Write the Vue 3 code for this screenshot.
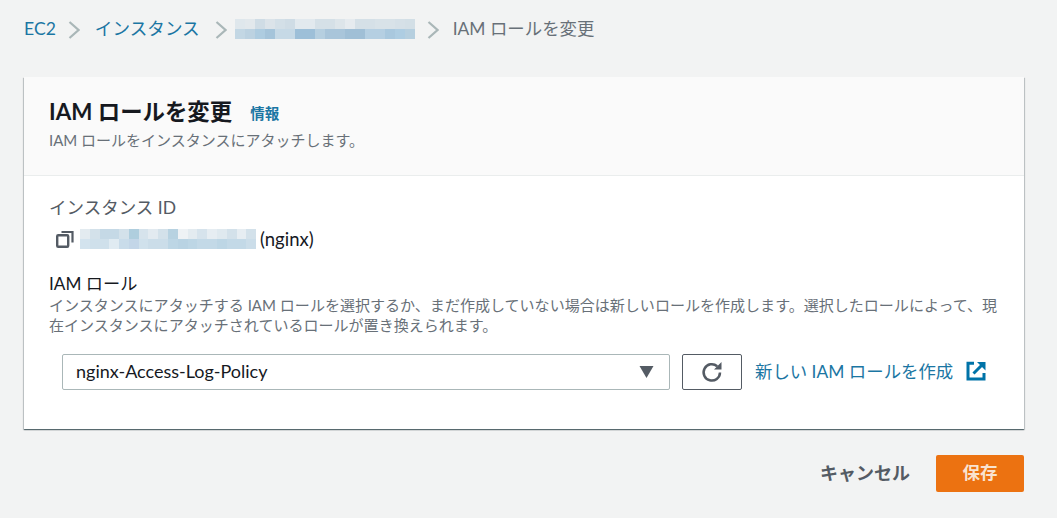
<script setup>
const crumbBlur = [
  ['#dfe7ec','#e2e8ec','#cfdce5','#dbe3e9','#d3dfe7','#cfdce5','#e2e9ee','#e2e9ee','#d5e0e7','#d5e0e7','#dde5ea','#e6ebef','#d5e0e7','#d5e0e7','#d8e2e8','#d8e2e8','#d5e0e7','#d3dfe6'],
  ['#c3d7e4','#bcd2e1','#aecce0','#a5c4da','#c6d9e6','#c6d9e6','#9dbfd8','#9dbfd8','#b6cfe0','#a9c5da','#a9c5da','#a0bfd6','#a0bfd6','#b5cfe2','#b5cfe2','#a9c8de','#aecde2','#b6cfdf']
]
const idBlur = [
  ['#e3ebf0','#d3e1ea','#c5d9e6','#c5d9e6','#d3e1ea','#afcede','#d6e3ec','#e2eaf0','#d3e1ea','#b7d2e1','#eef2f5','#e3ebf0','#d6e3ec','#e6edf2','#dfe9ef','#d3e1ea','#e6edf2','#d3e1ea'],
  ['#d3e3ee','#cfe0eb','#cfe0eb','#e0ebf2','#c9dcea','#c3d6e8','#d0e1ec','#cbdde9','#cbdde9','#bdd6e5','#b9d3e3','#bdd6e5','#c3d9e7','#c3d9e7','#bdd6e5','#c3d9e7','#c3d9e7','#cbdde9']
]
</script>

<template>
  <div class="page">
    <nav class="crumbs">
      <a class="link">EC2</a>
      <svg class="chev chev-a" viewBox="0 0 12 18"><path d="M1.5 1l9 8-9 8" /></svg>
      <a class="link">インスタンス</a>
      <svg class="chev chev-b" viewBox="0 0 12 18"><path d="M1.5 1l9 8-9 8" /></svg>
      <div class="blur crumb-blur">
        <div v-for="(row, r) in crumbBlur" :key="r" class="blur-row">
          <span v-for="(c, i) in row" :key="i" :style="{ background: c }"></span>
        </div>
      </div>
      <svg class="chev chev-c" viewBox="0 0 12 18"><path d="M1.5 1l9 8-9 8" /></svg>
      <span class="current">IAM ロールを変更</span>
    </nav>

    <section class="card">
      <header class="card-head">
        <div class="title-row">
          <h1>IAM ロールを変更</h1>
          <a class="link info">情報</a>
        </div>
        <p>IAM ロールをインスタンスにアタッチします。</p>
      </header>
      <div class="card-body">
        <div class="label-id">インスタンス ID</div>
        <div class="id-row">
          <svg class="copy" viewBox="0 0 18 18" fill="none">
            <rect x="1.2" y="5.2" width="11" height="11.6" rx="1" stroke="#545b64" stroke-width="2.4" />
            <path d="M5.5 2h11v10.5" stroke="#545b64" stroke-width="2.2" />
          </svg>
          <div class="blur id-blur">
            <div v-for="(row, r) in idBlur" :key="r" class="blur-row">
              <span v-for="(c, i) in row" :key="i" :style="{ background: c }"></span>
            </div>
          </div>
          <span class="nginx">(nginx)</span>
        </div>
        <div class="label-role">IAM ロール</div>
        <p class="desc">インスタンスにアタッチする IAM ロールを選択するか、まだ作成していない場合は新しいロールを作成します。選択したロールによって、現在インスタンスにアタッチされているロールが置き換えられます。</p>
        <div class="control-row">
          <div class="select">
            <span>nginx-Access-Log-Policy</span>
            <svg class="caret" viewBox="0 0 14 12"><path d="M0 0h14L7 12z" fill="#545b64" /></svg>
          </div>
          <button class="refresh" type="button" aria-label="更新">
            <svg viewBox="0 0 22 22" fill="none">
              <path d="M19 11.5a8.2 8.2 0 1 1-2.8-6.3" stroke="#545b64" stroke-width="2.5" />
              <path d="M20.5 1v7.5H13z" fill="#545b64" />
            </svg>
          </button>
          <a class="link create">新しい IAM ロールを作成</a>
          <svg class="ext" viewBox="0 0 20 20" fill="none">
            <path d="M8 2.2H2v15.8h16V12" stroke="#0073a8" stroke-width="3" />
            <path d="M7.5 12.5L16.5 3.5" stroke="#0073a8" stroke-width="3" />
            <path d="M11 1h8.5v8.5z" fill="#0073a8" />
          </svg>
        </div>
      </div>
    </section>

    <footer class="actions">
      <button class="cancel" type="button">キャンセル</button>
      <button class="save" type="button">保存</button>
    </footer>
  </div>
</template>

<style>
html, body { margin: 0; background: #f2f3f3; }
</style>

<style scoped>
.page {
  width: 1057px;
  height: 518px;
  box-sizing: border-box;
  padding: 16px 33px 0 24px;
  background: #f2f3f3;
  color: #16191f;
  font-family: "Lato", "Noto Sans CJK JP", sans-serif;
  overflow: hidden;
}
.link { color: #1b76a3; }
.crumbs {
  display: flex;
  align-items: center;
  height: 26px;
  margin-bottom: 35px;
  font-size: 17.6px;
  line-height: 26px;
}
.chev { width: 12px; height: 18px; fill: none; stroke: #aab7b8; stroke-width: 2.2; flex: none; }
.chev-a { margin: 1px 15px 0 12px; }
.chev-b { margin: 1px 8px 0 15px; }
.chev-c { margin: 1px 14px 0 12px; }
.blur { display: flex; flex-direction: column; flex: none; }
.blur-row { display: flex; height: 10px; }
.blur-row span { flex: 1; }
.crumb-blur { width: 180px; height: 20px; }
.current { color: #687078; font-size: 17.4px; }
.card {
  background: #fff;
  box-shadow: 0 1px 1px 0 rgba(0, 28, 36, .5), 1px 1px 1px 0 rgba(0, 28, 36, .15), -1px 1px 1px 0 rgba(0, 28, 36, .15);
  height: 352px;
}
.card-head {
  height: 99px;
  box-sizing: border-box;
  padding: 21px 25px 0;
  background: #fafafa;
  border-bottom: 1px solid #eaeded;
}
.title-row { display: flex; align-items: center; gap: 19px; height: 28px; }
h1 { margin: 0; font-size: 22.4px; line-height: 28px; font-weight: 700; color: #16191f; }
.info { font-size: 14.5px; font-weight: 700; line-height: 20px; margin-top: 3px; margin-left: -1px; }
.card-head p { margin: 4px 0 0; font-size: 15px; line-height: 20px; color: #687078; }
.card-body { padding: 20px 25px 0; }
.label-id { font-size: 17.5px; line-height: 24px; color: #545b64; }
.id-row { display: flex; align-items: center; height: 26px; margin-top: 6px; font-size: 18.5px; }
.copy { width: 18px; height: 18px; margin-left: 7px; flex: none; }
.id-blur { width: 176px; height: 20px; margin-left: 6px; }
.nginx { margin-left: 4px; color: #16191f; }
.label-role { margin-top: 20px; font-size: 17.2px; line-height: 23px; color: #16191f; }
.desc { margin: 0; width: 952px; font-size: 15.04px; line-height: 20px; color: #687078; }
.control-row { display: flex; align-items: center; margin: 19px 0 0 13px; }
.select {
  box-sizing: border-box;
  width: 608px;
  height: 36px;
  display: flex;
  align-items: center;
  justify-content: space-between;
  padding: 0 15px 2px 13px;
  background: #fff;
  border: 1px solid #aab7b8;
  border-radius: 2px;
  font-size: 18px;
}
.caret { width: 15px; height: 12px; margin-top: 2px; }
.refresh {
  box-sizing: border-box;
  width: 60px;
  height: 36px;
  margin-left: 12px;
  padding: 0;
  display: flex;
  align-items: center;
  justify-content: center;
  background: #fff;
  border: 1px solid #545b64;
  border-radius: 2px;
}
.refresh svg { width: 22px; height: 22px; }
.create { margin: 0 0 3px 13px; font-size: 17.4px; white-space: nowrap; }
.ext { width: 20px; height: 20px; margin: 0 0 3px 13px; flex: none; }
.actions { display: flex; justify-content: flex-end; align-items: center; margin-top: 26px; }
.cancel {
  border: 0;
  background: none;
  padding: 0 0 4px;
  margin-right: 26px;
  font: 700 18px "Lato", "Noto Sans CJK JP", sans-serif;
  color: #545b64;
}
.save {
  width: 88px;
  height: 37px;
  border: 0;
  padding: 0 0 4px;
  border-radius: 2px;
  background: #ec7211;
  color: #f9e3d0;
  font: 700 17.5px "Lato", "Noto Sans CJK JP", sans-serif;
}
</style>
